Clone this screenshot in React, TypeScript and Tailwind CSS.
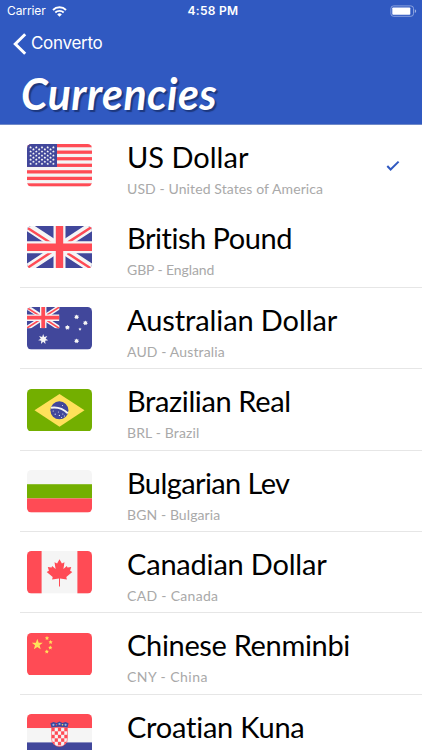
import type { ReactNode } from "react";

const RED = "#ff4b55";
const NAVY = "#41479b";
const SNOW = "#f5f5f5";

function starPoints(cx: number, cy: number, outer: number, inner: number, tips = 5) {
  const pts: string[] = [];
  for (let i = 0; i < tips * 2; i++) {
    const r = i % 2 === 0 ? outer : inner;
    const a = -Math.PI / 2 + (i * Math.PI) / tips;
    pts.push(`${(cx + r * Math.cos(a)).toFixed(2)},${(cy + r * Math.sin(a)).toFixed(2)}`);
  }
  return pts.join(" ");
}

function Flag({ id, children }: { id: string; children: ReactNode }) {
  return (
    <svg viewBox="0 0 65 42.6" className="mt-px block h-[42.6px] w-[65px] shrink-0">
      <defs>
        <clipPath id={id}>
          <rect width="65" height="42.6" rx="4.5" />
        </clipPath>
      </defs>
      <g clipPath={`url(#${id})`}>{children}</g>
    </svg>
  );
}

function UsaFlag() {
  const h = 42.6 / 13;
  const rows = [0, 1, 2, 3, 4, 5, 6, 7, 8];
  return (
    <Flag id="usa">
      <rect width="65" height="42.6" fill={SNOW} />
      {[0, 2, 4, 6, 8, 10, 12].map((i) => (
        <rect key={i} y={i * h} width="65" height={h} fill={RED} />
      ))}
      <rect width="30" height={h * 7} fill={NAVY} />
      {rows.map((r) =>
        (r % 2 === 0 ? [0, 1, 2, 3, 4] : [0.5, 1.5, 2.5, 3.5]).map((c) => (
          <polygon key={`${r}-${c}`} points={starPoints(3.6 + c * 5.7, 3.4 + r * 2.05, 1.35, 0.75)} fill={SNOW} />
        )),
      )}
    </Flag>
  );
}

function UkFlag() {
  return (
    <Flag id="uk">
      <rect width="65" height="42.6" fill={NAVY} />
      <path d="M0 0 65 42.6M65 0 0 42.6" stroke={SNOW} strokeWidth="8.6" />
      <path d="M1 2.2 25 17.8M40.5 27.2 64.5 42.8M65 0.8 41 16.4M24.5 26 0.5 41.8" stroke={RED} strokeWidth="2.5" />
      <path d="M32.5 0V42.6M0 21.3H65" stroke={SNOW} strokeWidth="12" />
      <path d="M32.5 0V42.6M0 21.3H65" stroke={RED} strokeWidth="7.4" />
    </Flag>
  );
}

function AustraliaFlag() {
  return (
    <Flag id="australia">
      <rect width="65" height="42.6" fill={NAVY} />
      <svg width="32.4" height="21.3" viewBox="0 0 65 42.6" preserveAspectRatio="none">
        <path d="M0 0 65 42.6M65 0 0 42.6" stroke={SNOW} strokeWidth="9" />
        <path d="M0 1.5 26 18M39 26 65 43M65 0 40 16M25 26 0 42" stroke={RED} strokeWidth="3" />
        <path d="M32.5 0V42.6M0 21.3H65" stroke={SNOW} strokeWidth="13" />
        <path d="M32.5 0V42.6M0 21.3H65" stroke={RED} strokeWidth="7.6" />
      </svg>
      <g fill={SNOW}>
        <polygon points={starPoints(16.2, 32.2, 5.2, 2.5, 7)} />
        <polygon points={starPoints(49.6, 10, 2.6, 1.6, 7)} />
        <polygon points={starPoints(40.4, 20.5, 2.6, 1.6, 7)} />
        <polygon points={starPoints(58.4, 16, 2.6, 1.6, 7)} />
        <polygon points={starPoints(49.6, 34, 2.6, 1.6, 7)} />
        <polygon points={starPoints(53, 22.2, 1.7, 0.8)} />
      </g>
    </Flag>
  );
}

function BrazilFlag() {
  return (
    <Flag id="brazil">
      <rect width="65" height="42.6" fill="#73af00" />
      <path d="M32.5 5 57.5 21.3 32.5 37.7 7.5 21.3Z" fill="#ffe15a" />
      <circle cx="32.4" cy="21.3" r="9" fill={NAVY} />
      <path d="M24 18.7Q33.5 17.2 40.8 24.2" fill="none" stroke={SNOW} strokeWidth="1.9" />
      <g fill={SNOW}>
        <circle cx="26.2" cy="22" r=".55" />
        <circle cx="28.2" cy="25.2" r=".6" />
        <circle cx="31.4" cy="23" r=".5" />
        <circle cx="32.4" cy="26.4" r=".6" />
        <circle cx="35.8" cy="25" r=".6" />
        <circle cx="37.4" cy="27" r=".6" />
        <circle cx="34.6" cy="28.4" r=".5" />
        <circle cx="35.5" cy="16.6" r=".5" />
      </g>
    </Flag>
  );
}

function BulgariaFlag() {
  return (
    <Flag id="bulgaria">
      <rect width="65" height="14.2" fill={SNOW} />
      <rect y="14.2" width="65" height="14.2" fill="#73af00" />
      <rect y="28.4" width="65" height="14.2" fill={RED} />
    </Flag>
  );
}

function CanadaFlag() {
  return (
    <Flag id="canada">
      <rect width="65" height="42.6" fill={SNOW} />
      <rect width="14.6" height="42.6" fill={RED} />
      <rect x="50.4" width="14.6" height="42.6" fill={RED} />
      <path
        transform="translate(32.5 0)"
        fill={RED}
        d="M0 8.2 2.4 12.5 5 11.3 3.9 18 7.3 14.9 8 16.6 11.7 16 10.6 19.8 12.8 21 6.8 26.1 7.4 28.4 .5 27.6V35.5H-.5V27.6L-7.4 28.4-6.8 26.1-12.8 21-10.6 19.8-11.7 16-8 16.6-7.3 14.9-3.9 18-5 11.3-2.4 12.5Z"
      />
    </Flag>
  );
}

function ChinaFlag() {
  return (
    <Flag id="china">
      <rect width="65" height="42.6" fill={RED} />
      <g fill="#ffe15a">
        <polygon points={starPoints(10.3, 11.6, 5.8, 2.4)} />
        <polygon points={starPoints(20, 5.2, 2.2, 1.1)} />
        <polygon points={starPoints(23.6, 9.2, 2.2, 1.1)} />
        <polygon points={starPoints(23.3, 14.6, 2.2, 1.1)} />
        <polygon points={starPoints(19.8, 18.6, 2.2, 1.1)} />
      </g>
    </Flag>
  );
}

function CroatiaFlag() {
  const cells: ReactNode[] = [];
  for (let r = 0; r < 5; r++) {
    for (let c = 0; c < 5; c++) {
      if ((r + c) % 2 === 0) {
        cells.push(<rect key={`${r}-${c}`} x={24.5 + c * 3.2} y={13.8 + r * 3.5} width="3.2" height="3.5" fill={RED} />);
      }
    }
  }
  return (
    <Flag id="croatia">
      <rect width="65" height="14.2" fill={RED} />
      <rect y="14.2" width="65" height="14.2" fill={SNOW} />
      <rect y="28.4" width="65" height="14.2" fill={NAVY} />
      <clipPath id="shield">
        <path d="M24.5 13.6H40.5V24.5A8 8 0 0 1 24.5 24.5Z" />
      </clipPath>
      <g clipPath="url(#shield)">
        <rect x="24" y="13" width="17" height="20" fill={SNOW} />
        {cells}
      </g>
      <path d="M24.5 13.6H40.5V24.5A8 8 0 0 1 24.5 24.5Z" fill="none" stroke={RED} strokeWidth=".6" />
      <path d="M23.4 9.2 26.5 8 29.5 9 32.5 7.6 35.5 9 38.5 8 41.6 9.2 40.5 13.6Q32.5 11.8 24.5 13.6Z" fill={NAVY} />
      <g fill="#8fb8e8">
        <circle cx="26.4" cy="10.8" r="1.1" />
        <circle cx="32.5" cy="10" r="1.1" />
        <circle cx="38.6" cy="10.8" r="1.1" />
      </g>
      <circle cx="29.5" cy="10.8" r=".8" fill={RED} />
      <circle cx="35.5" cy="10.8" r=".8" fill="#ffe15a" />
    </Flag>
  );
}

type Currency = {
  name: string;
  detail?: string;
  flag: ReactNode;
  nameTracking: string;
  detailTracking: string;
  selected?: boolean;
};

const currencies: Currency[] = [
  { name: "US Dollar", detail: "USD - United States of America", flag: <UsaFlag />, nameTracking: "tracking-normal", detailTracking: "tracking-[0.1px]", selected: true },
  { name: "British Pound", detail: "GBP - England", flag: <UkFlag />, nameTracking: "tracking-[-0.48px]", detailTracking: "tracking-[-0.1px]" },
  { name: "Australian Dollar", detail: "AUD - Australia", flag: <AustraliaFlag />, nameTracking: "tracking-[-0.1px]", detailTracking: "tracking-[0.13px]" },
  { name: "Brazilian Real", detail: "BRL - Brazil", flag: <BrazilFlag />, nameTracking: "tracking-[-0.37px]", detailTracking: "tracking-[0.13px]" },
  { name: "Bulgarian Lev", detail: "BGN - Bulgaria", flag: <BulgariaFlag />, nameTracking: "tracking-[-0.6px]", detailTracking: "tracking-[0.09px]" },
  { name: "Canadian Dollar", detail: "CAD - Canada", flag: <CanadaFlag />, nameTracking: "tracking-[-0.2px]", detailTracking: "tracking-[0.3px]" },
  { name: "Chinese Renminbi", detail: "CNY - China", flag: <ChinaFlag />, nameTracking: "tracking-[-0.33px]", detailTracking: "tracking-[0.45px]" },
  { name: "Croatian Kuna", flag: <CroatiaFlag />, nameTracking: "tracking-[-0.23px]", detailTracking: "tracking-normal" },
];

function StatusBar() {
  return (
    <div className="grid h-[22px] grid-cols-3 items-center pr-[5px] pl-[7px] font-['Inter',sans-serif] text-[12px] leading-none">
      <div className="flex items-center gap-[6px]">
        <span className="tracking-[-0.1px]">Carrier</span>
        <svg viewBox="0 0 15 11" className="h-[11px] w-[15px]" fill="none" stroke="white">
          <path d="M1 4A9.2 9.2 0 0 1 14 4" strokeWidth="1.9" />
          <path d="M3.3 6.5A6 6 0 0 1 11.7 6.5" strokeWidth="1.8" />
          <path d="M7.5 10.8 5.2 8.4A3.3 3.3 0 0 1 9.8 8.4Z" fill="white" stroke="none" />
        </svg>
      </div>
      <span className="pl-[2px] text-center font-semibold tracking-[0.3px]">4:58 PM</span>
      <svg viewBox="0 0 27 12" className="h-[12px] w-[27px] justify-self-end">
        <rect x=".9" y=".9" width="22.6" height="10.4" rx="2.6" fill="none" stroke="#9fb3e4" strokeWidth=".8" />
        <rect x="2.3" y="2.4" width="18" height="7.4" rx=".8" fill="white" />
        <path d="M24.8 4.2Q26.2 4.8 26.2 6.1T24.8 8Z" fill="#9fb3e4" />
      </svg>
    </div>
  );
}

export default function App() {
  return (
    <div className="h-[750px] w-[422px] overflow-hidden bg-white font-['Lato',sans-serif] [font-variant-ligatures:none]">
      <header className="h-[125px] border-b border-[#6f89c8] bg-[#3059c1] text-white">
        <StatusBar />
        <div className="flex h-[43px] items-center gap-[4px] pl-[13px] font-['Inter',sans-serif]">
          <svg viewBox="0 0 14 22" className="h-[22px] w-[14px]">
            <path d="M12.2 1.3 2.3 11 12.2 20.7" fill="none" stroke="white" strokeWidth="3" />
          </svg>
          <span className="text-[17px] leading-none tracking-[-0.3px]">Converto</span>
        </div>
        <h1 className="pl-[21px] text-[43px] leading-[58px] font-bold tracking-[0.4px] italic [text-shadow:2px_2px_1px_#1d387e]">Currencies</h1>
      </header>
      <ul>
        {currencies.map((c, i) => (
          <li key={c.name} className="h-[81.42px] pl-5">
            <div className={`flex h-full items-center border-b pl-[7px] ${i === 0 ? "border-transparent" : "border-[#e6e6e6]"}`}>
              {c.flag}
              <div className="ml-[35px] flex-1 pt-[7.6px] whitespace-nowrap">
                <div className={`text-[29px] leading-[36px] text-black ${c.nameTracking}`}>{c.name}</div>
                <div className={`mt-[4px] h-[20px] text-[14px] leading-[20px] text-[#a9a9a9] ${c.detailTracking}`}>{c.detail}</div>
              </div>
              {c.selected && (
                <svg viewBox="0 0 14 12" className="mt-px mr-[22px] h-[12px] w-[14px]">
                  <path d="M1.3 6 4.6 9.5 12.6 1.6" fill="none" stroke="#3059c1" strokeWidth="2" />
                </svg>
              )}
            </div>
          </li>
        ))}
      </ul>
    </div>
  );
}
